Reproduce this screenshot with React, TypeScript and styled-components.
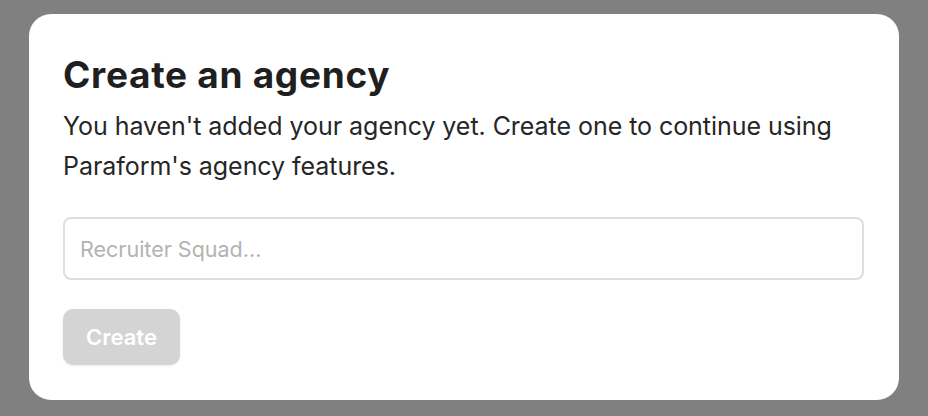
import styled, { createGlobalStyle } from 'styled-components'

const GlobalStyle = createGlobalStyle`
  html, body {
    margin: 0;
    padding: 0;
    background: #808080;
    font-family: Inter, 'Noto Sans', sans-serif;
  }
`

export default function App() {
  return (
    <>
      <GlobalStyle />
      <Page>
        <Card>
          <Title>Create an agency</Title>
          <Description>
            You haven't added your agency yet. Create one to continue using Paraform's agency features.
          </Description>
          <NameInput placeholder="Recruiter Squad..." />
          <CreateButton disabled>Create</CreateButton>
        </Card>
      </Page>
    </>
  )
}

const Page = styled.div`
  width: 928px;
  height: 416px;
  padding: 14px 29px 0;
  box-sizing: border-box;
`

const Card = styled.div`
  display: flex;
  flex-direction: column;
  align-items: flex-start;
  width: 870px;
  height: 386px;
  box-sizing: border-box;
  padding: 39px 35px 0 34px;
  background: #ffffff;
  border-radius: 22px;
`

const Title = styled.h1`
  margin: 0;
  font-size: 37px;
  line-height: 44px;
  font-weight: 700;
  letter-spacing: 0.7px;
  color: #1f1f1f;
`

const Description = styled.p`
  margin: 9px 0 0;
  max-width: 800px;
  font-size: 25px;
  line-height: 40px;
  letter-spacing: -0.05px;
  color: #262626;
`

const NameInput = styled.input`
  margin-top: 31px;
  width: 100%;
  height: 63px;
  box-sizing: border-box;
  padding: 0 15px;
  border: 2px solid #dedede;
  border-radius: 8px;
  font-family: inherit;
  font-size: 21.5px;
  color: #262626;
  outline: none;

  &::placeholder {
    color: #b3b3b3;
  }
`

const CreateButton = styled.button`
  margin-top: 29px;
  width: 117px;
  height: 56px;
  border: none;
  border-radius: 10px;
  background: #d4d4d4;
  color: #ffffff;
  font-family: inherit;
  font-size: 22px;
  font-weight: 600;
  box-shadow: 0 1px 3px rgba(0, 0, 0, 0.08);
`
